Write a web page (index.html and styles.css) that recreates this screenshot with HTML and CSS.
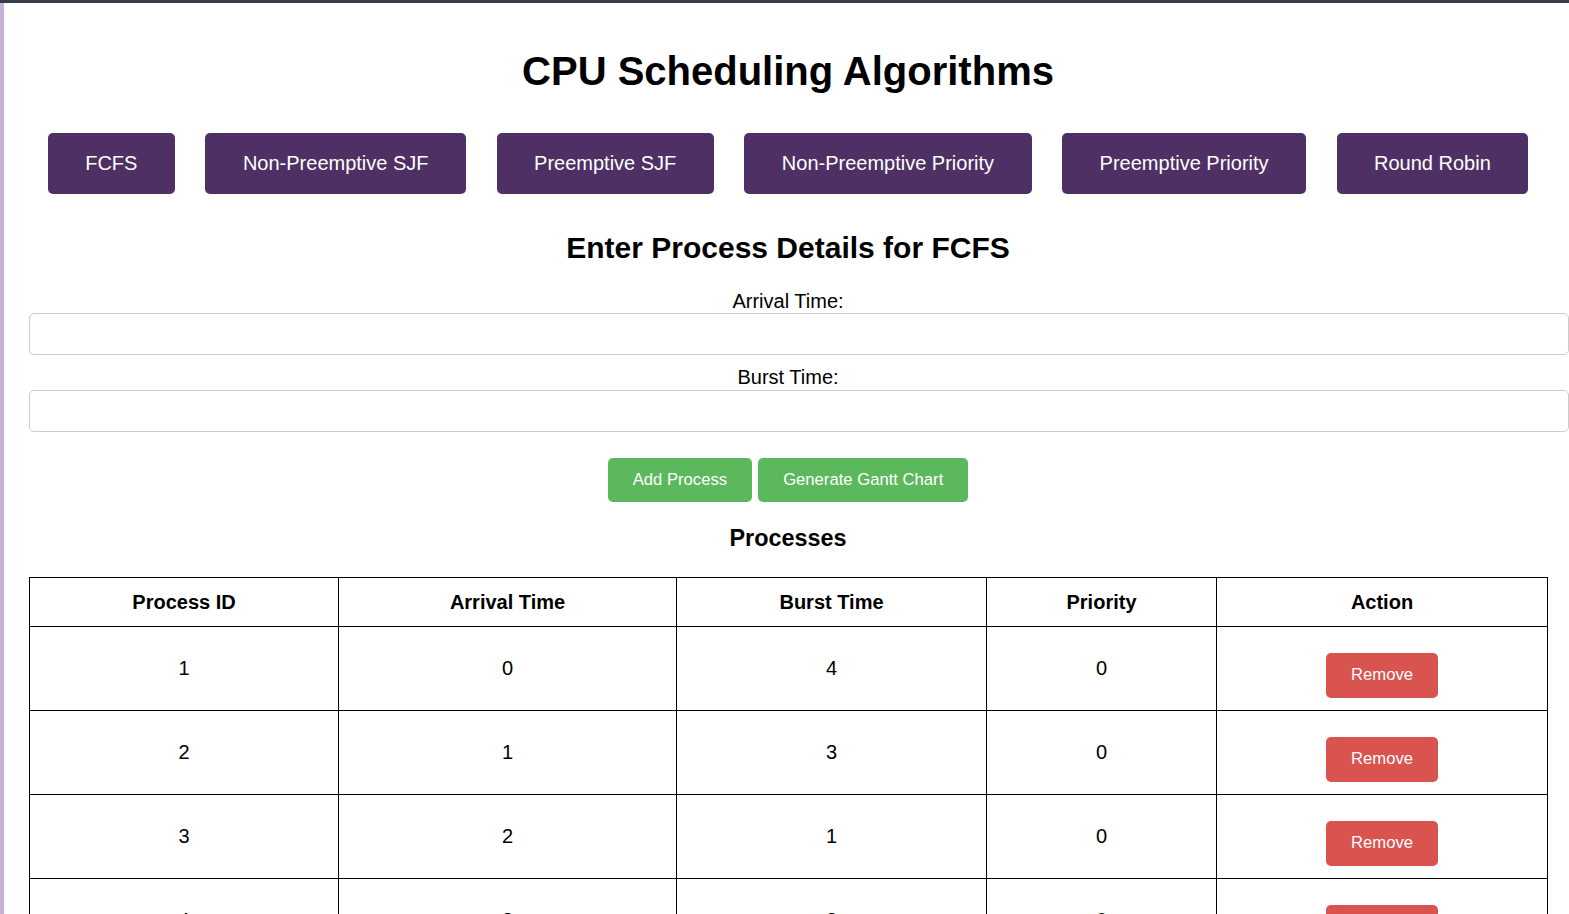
FILE: index.html
```html
<!DOCTYPE html>
<html lang="en">
<head>
<meta charset="utf-8">
<title>CPU Scheduling Algorithms</title>
<link rel="stylesheet" href="styles.css">
</head>
<body>
<div class="frame">
  <div class="page">
    <h1 class="title">CPU Scheduling Algorithms</h1>
    <nav class="algos">
      <button class="algo">FCFS</button>
      <button class="algo">Non-Preemptive SJF</button>
      <button class="algo">Preemptive SJF</button>
      <button class="algo">Non-Preemptive Priority</button>
      <button class="algo">Preemptive Priority</button>
      <button class="algo">Round Robin</button>
    </nav>
    <h2 class="subtitle">Enter Process Details for FCFS</h2>
    <form class="form">
      <label class="label" for="arrival">Arrival Time:</label>
      <input class="field" id="arrival" type="number">
      <label class="label label-second" for="burst">Burst Time:</label>
      <input class="field" id="burst" type="number">
      <div class="actions">
        <button type="button" class="btn-green">Add Process</button>
        <button type="button" class="btn-green">Generate Gantt Chart</button>
      </div>
    </form>
    <h3 class="section">Processes</h3>
    <table class="ptable">
      <colgroup>
        <col class="c1"><col class="c2"><col class="c3"><col class="c4"><col class="c5">
      </colgroup>
      <thead>
        <tr><th>Process ID</th><th>Arrival Time</th><th>Burst Time</th><th>Priority</th><th>Action</th></tr>
      </thead>
      <tbody>
        <tr><td>1</td><td>0</td><td>4</td><td>0</td><td><button class="btn-red">Remove</button></td></tr>
        <tr><td>2</td><td>1</td><td>3</td><td>0</td><td><button class="btn-red">Remove</button></td></tr>
        <tr><td>3</td><td>2</td><td>1</td><td>0</td><td><button class="btn-red">Remove</button></td></tr>
        <tr><td>4</td><td>3</td><td>2</td><td>0</td><td><button class="btn-red">Remove</button></td></tr>
      </tbody>
    </table>
  </div>
</div>
</body>
</html>
```
FILE: styles.css
```css
html, body {
  margin: 0;
  padding: 0;
}
body {
  border-top: 3px solid #363c4a;
  background: #ffffff;
  font-family: "Liberation Sans", Arial, sans-serif;
  color: #000;
  overflow: hidden;
}
.frame {
  display: flow-root;
  border-left: 4px solid #c8b0dc;
  min-height: 100vh;
}
.page {
  padding: 0 22px 0 25px;
}
.title {
  font-size: 40px;
  font-weight: bold;
  line-height: 46px;
  text-align: center;
  margin: 45px 0 0;
}
.algos {
  display: flex;
  justify-content: center;
  gap: 30.5px;
  margin-top: 39px;
}
.algo {
  background: #4f3064;
  color: #fff;
  border: none;
  border-radius: 5px;
  font-family: "Liberation Sans", Arial, sans-serif;
  font-size: 20px;
  line-height: 23px;
  padding: 18.75px 37.5px;
}
.subtitle {
  font-size: 30px;
  font-weight: bold;
  line-height: 34px;
  text-align: center;
  margin: 37px 0 0;
}
.form {
  display: flex;
  flex-direction: column;
  margin-top: 25px;
}
.label {
  font-size: 20px;
  line-height: 23px;
  text-align: center;
  margin-bottom: 0.5px;
}
.label-second {
  margin-top: 11px;
}
.field {
  width: 100%;
  box-sizing: content-box;
  padding: 10px;
  border: 1px solid #cccccc;
  border-radius: 5px;
  font-size: 16.67px;
  line-height: 20px;
  height: 20px;
  font-family: "Liberation Sans", Arial, sans-serif;
  margin: 0;
}
.actions {
  display: flex;
  justify-content: center;
  gap: 6px;
  margin-top: 26px;
}
.btn-green, .btn-red {
  border: none;
  border-radius: 5px;
  color: #fff;
  font-family: "Liberation Sans", Arial, sans-serif;
  font-size: 16.67px;
  line-height: 19px;
  padding: 12.5px 25px;
}
.btn-green {
  background: #5cb85c;
  line-height: 19.5px;
}
.btn-red {
  background: #d9534f;
  line-height: 20px;
  margin-top: 13px;
}
.section {
  font-size: 23.4px;
  font-weight: bold;
  line-height: 27px;
  text-align: center;
  margin: 23px 0 0;
}
.ptable {
  width: 100%;
  border-collapse: collapse;
  table-layout: fixed;
  margin-top: 25px;
  font-size: 20px;
}
.c1 { width: 309px; }
.c2 { width: 338px; }
.c3 { width: 310px; }
.c4 { width: 230px; }
.c5 { width: 331px; }
.ptable th, .ptable td {
  border: 1px solid #000;
  text-align: center;
  vertical-align: middle;
  padding: 12.5px;
  line-height: 23px;
}
.ptable th {
  font-weight: bold;
}
```
